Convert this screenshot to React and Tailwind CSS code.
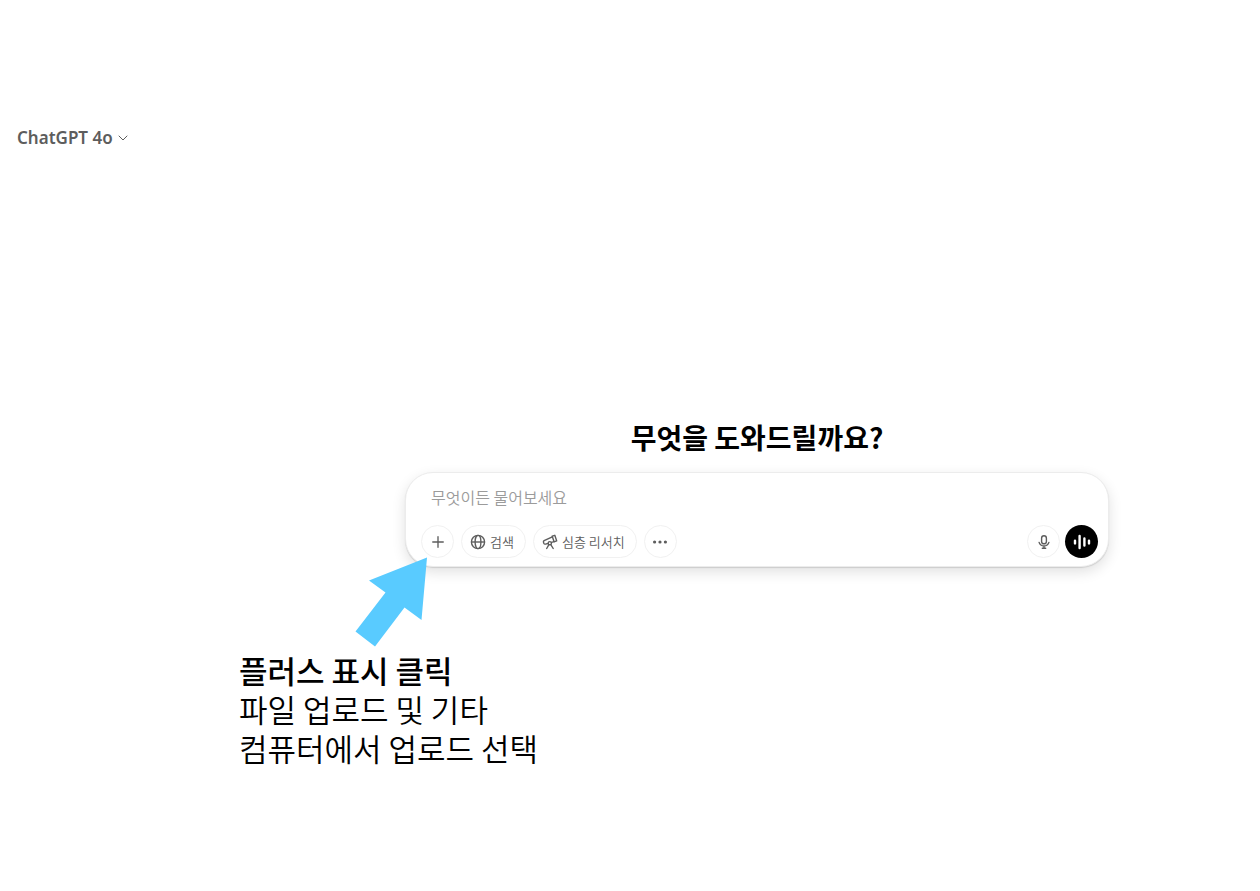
import React from 'react';
import { ChevronDown, Plus } from 'lucide-react';

function GlobeIcon() {
  return (
    <svg width="16" height="16" viewBox="0 0 16 16" fill="none" stroke="currentColor" strokeWidth="1.4" aria-hidden="true">
      <circle cx="8" cy="8" r="6.6" />
      <ellipse cx="8" cy="8" rx="2.9" ry="6.6" />
      <path d="M1.4 8h13.2" />
    </svg>
  );
}

function TelescopeIcon() {
  return (
    <svg width="16" height="16" viewBox="0 0 16 16" fill="none" stroke="currentColor" strokeWidth="1.4" strokeLinejoin="round" strokeLinecap="round" aria-hidden="true">
      <path d="M10.2 2.2 12.8 1.3 14.7 6.9 12.1 7.8Z" />
      <path d="M10.3 2.8 2.1 6.6Q1.1 7.2 1.5 8.4L1.8 9.3Q2.3 10.4 3.5 10.1L6 9.5M9.6 8.4 12 7.7" />
      <circle cx="7.8" cy="9.2" r="1.6" />
      <path d="M6.9 10.7 4.7 14.5M8.8 10.7 11.2 14.5" />
    </svg>
  );
}

function DotsIcon() {
  return (
    <svg width="16" height="16" viewBox="0 0 16 16" fill="currentColor" aria-hidden="true">
      <circle cx="2.6" cy="8" r="1.6" />
      <circle cx="8" cy="8" r="1.6" />
      <circle cx="13.4" cy="8" r="1.6" />
    </svg>
  );
}

function MicIcon() {
  return (
    <svg width="16" height="16" viewBox="0 0 16 16" fill="none" stroke="currentColor" strokeWidth="1.4" strokeLinecap="round" aria-hidden="true">
      <rect x="5.6" y="1.8" width="4.8" height="8" rx="2.4" />
      <path d="M3.1 8.4C3.8 10.7 5.7 12 8 12s4.2-1.3 4.9-3.6M8 12v2.3M6.3 14.3h3.4" />
    </svg>
  );
}

function VoiceIcon() {
  return (
    <svg width="18" height="18" viewBox="0 0 18 18" stroke="currentColor" strokeWidth="2.4" strokeLinecap="round" aria-hidden="true">
      <path d="M2 7.6v2.8M6.6 3v12M11.4 5.4v7.2M16 7.6v2.8" />
    </svg>
  );
}

const roundButton = 'flex size-[33px] shrink-0 items-center justify-center rounded-full border border-[#f1f1f1] text-[#5d5d5d]';
const chip = 'flex h-[33px] items-center gap-1 rounded-full border border-[#f1f1f1] pr-[11px] pl-2 text-[13px] text-[#5d5d5d]';

function Composer() {
  return (
    <form
      className="relative rounded-[28px] border border-[#ececec] bg-white py-2 pr-[10px] pl-[15px] shadow-[0_5px_14px_rgba(0,0,0,0.12),0_1px_1px_rgba(0,0,0,0.12)]"
      onSubmit={(e) => e.preventDefault()}
    >
      <input
        type="text"
        aria-label="무엇이든 물어보세요"
        placeholder="무엇이든 물어보세요"
        className="mt-1 mb-4 block h-6 w-full px-[10px] text-base outline-none placeholder:text-[#9b9b9b]"
      />
      <div className="flex items-center gap-[7px]">
        <button type="button" aria-label="추가" className={roundButton}>
          <Plus size={18} strokeWidth={1.8} />
        </button>
        <button type="button" className={chip}>
          <GlobeIcon />
          검색
        </button>
        <button type="button" className={chip}>
          <TelescopeIcon />
          심층 리서치
        </button>
        <button type="button" aria-label="더 보기" className={roundButton}>
          <DotsIcon />
        </button>
        <div className="ml-auto flex items-center gap-[5px]">
          <button type="button" aria-label="받아쓰기" className={roundButton}>
            <MicIcon />
          </button>
          <button
            type="button"
            aria-label="음성 모드"
            className="flex size-[33px] shrink-0 items-center justify-center rounded-full bg-black text-white"
          >
            <VoiceIcon />
          </button>
        </div>
      </div>
      {/* arrow pointing at the plus button */}
      <svg className="absolute -left-[51px] top-[84px]" width="72" height="90" viewBox="0 0 72 90" aria-hidden="true">
        <path d="M72 0.5 66.5 63 49.5 50.5 20 89.5 0.5 74.5 30.5 35.5 14 23.5Z" fill="#59cbff" />
      </svg>
    </form>
  );
}

export default function App() {
  return (
    <div className="min-h-screen bg-white pt-[122px] font-['Noto_Sans','Noto_Sans_CJK_KR',sans-serif] text-black">
      <header className="px-[17px]">
        <button type="button" className="flex h-8 items-center gap-[2px] text-[17px] font-semibold text-[#5d5d5d]">
          ChatGPT 4o
          <ChevronDown size={16} strokeWidth={1.5} />
        </button>
      </header>

      <main className="font-['Noto_Sans_CJK_KR',sans-serif] font-[350]">
        <section className="pt-[263px] pl-[254px]">
          <div className="mx-auto max-w-[704px]">
            <h1 className="mb-[15px] text-center text-[28px] leading-10 font-bold">무엇을 도와드릴까요?</h1>
            <Composer />
          </div>
        </section>

        <section className="pt-[83px] pl-[239px] text-[31px] leading-[39px]">
          <h2 className="font-medium">플러스 표시 클릭</h2>
          <p>파일 업로드 및 기타</p>
          <p>컴퓨터에서 업로드 선택</p>
        </section>
      </main>
    </div>
  );
}
